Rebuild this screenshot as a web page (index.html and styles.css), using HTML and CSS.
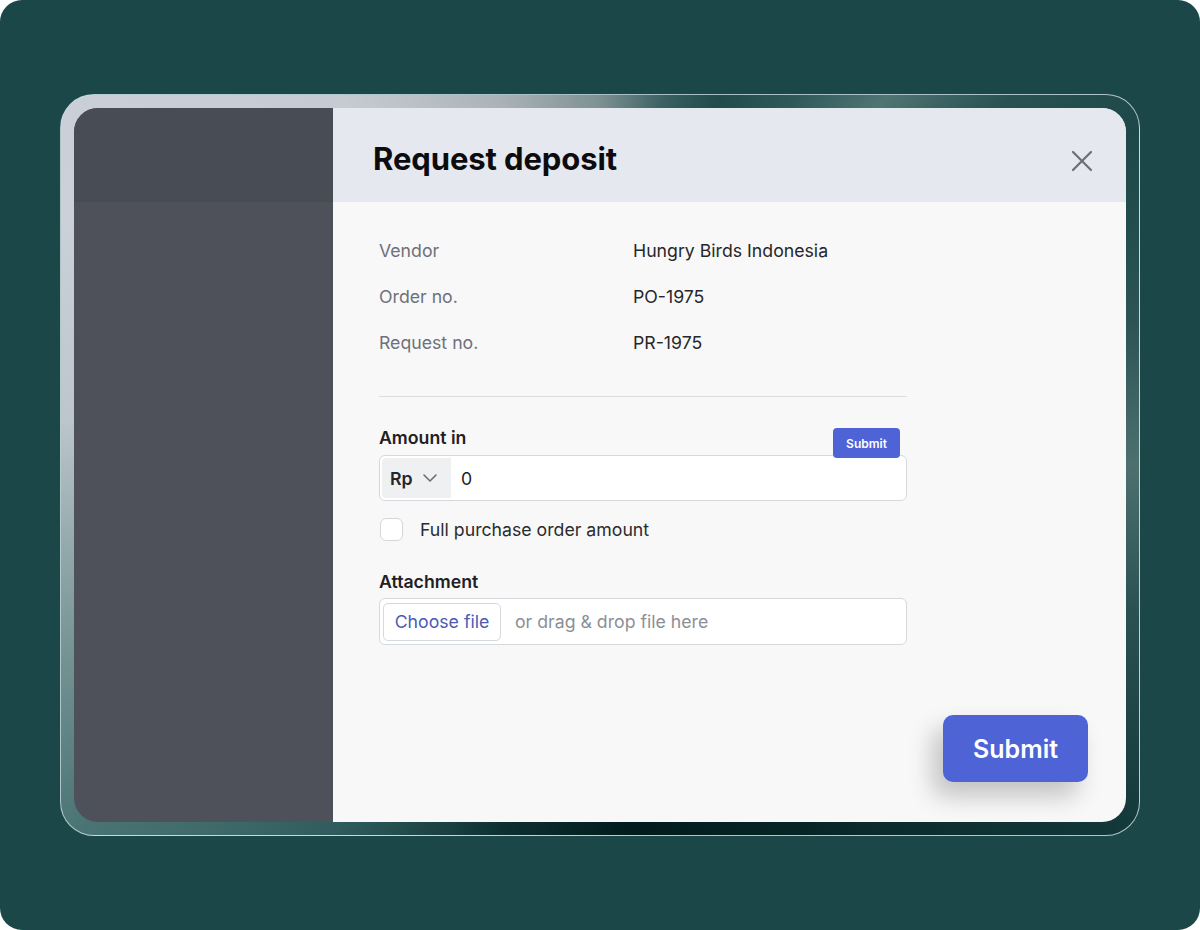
FILE: index.html
```html
<!DOCTYPE html>
<html lang="en">
<head>
<meta charset="utf-8">
<title>Request deposit</title>
<link rel="stylesheet" href="styles.css">
</head>
<body>
<div class="screen">
  <div class="bezel">
    <div class="window">
      <aside class="sidebar">
        <div class="sidebar-top"></div>
      </aside>
      <section class="dialog">
        <header class="dialog-header">
          <h1 class="title">Request deposit</h1>
          <button class="close" aria-label="Close">
            <svg width="22" height="22" viewBox="0 0 22 22"><path d="M2 2 L20 20 M20 2 L2 20" stroke="#6b6e75" stroke-width="2.2" stroke-linecap="round" fill="none"/></svg>
          </button>
        </header>
        <div class="dialog-body">
          <dl class="details">
            <div class="row"><dt>Vendor</dt><dd>Hungry Birds Indonesia</dd></div>
            <div class="row"><dt>Order no.</dt><dd>PO-1975</dd></div>
            <div class="row"><dt>Request no.</dt><dd>PR-1975</dd></div>
          </dl>
          <hr class="divider">
          <div class="field amount-field">
            <label class="field-label">Amount in</label>
            <div class="input amount-input">
              <div class="currency">
                <span>Rp</span>
                <svg width="16" height="10" viewBox="0 0 16 10"><path d="M2 2 L8 8 L14 2" stroke="#6b6e75" stroke-width="1.6" fill="none" stroke-linecap="round" stroke-linejoin="round"/></svg>
              </div>
              <span class="amount-value">0</span>
            </div>
            <button class="mini-submit">Submit</button>
          </div>
          <label class="check-row">
            <span class="checkbox"></span>
            <span>Full purchase order amount</span>
          </label>
          <div class="field attach-field">
            <label class="field-label">Attachment</label>
            <div class="input file-input">
              <button class="choose">Choose file</button>
              <span class="drop-hint">or drag &amp; drop file here</span>
            </div>
          </div>
          <div class="footer">
            <button class="submit">Submit</button>
          </div>
        </div>
      </section>
    </div>
  </div>
</div>
</body>
</html>
```
FILE: styles.css
```css
* { box-sizing: border-box; }
html, body { margin: 0; padding: 0; background: #ffffff; }
body { font-family: Inter, "Noto Sans", "Liberation Sans", sans-serif; }

.screen {
  width: 1200px;
  height: 930px;
  background: #1c4749;
  border-radius: 22px;
  padding: 94px 60px;
}

.bezel {
  height: 742px;
  border-radius: 34px;
  padding: 13px;
  border: 1.5px solid rgba(200, 220, 224, 0.85);
  background: conic-gradient(from 0deg at 50% 50%,
    #7d9194 0deg,
    #3a6061 10deg,
    #214a4b 18deg,
    #2f5859 28deg,
    #4f7573 38deg,
    #2a5253 48deg,
    #1d4748 58deg,
    #2c5455 75deg,
    #4d706f 90deg,
    #2b5253 105deg,
    #133839 125deg,
    #072526 150deg,
    #021b1c 175deg,
    #0d2f30 195deg,
    #2e5a5b 215deg,
    #4a7474 235deg,
    #8aa2a5 258deg,
    #bcc6cc 275deg,
    #cbd0d9 295deg,
    #c6cad3 325deg,
    #aab1b8 345deg,
    #7d9194 360deg);
}

.window {
  display: flex;
  height: 100%;
  border-radius: 24px;
  overflow: hidden;
}

.sidebar {
  width: 259px;
  background: #4e5159;
  flex-shrink: 0;
}
.sidebar-top { height: 94px; background: #484c54; }

.dialog {
  flex: 1;
  display: flex;
  flex-direction: column;
  background: #f8f8f8;
}

.dialog-header {
  height: 94px;
  background: #e5e8ef;
  display: flex;
  align-items: center;
  justify-content: space-between;
  padding: 0 33px 0 40px;
}
.title {
  margin: 0;
  font-size: 31px;
  font-weight: 700;
  color: #0c0c0e;
  letter-spacing: -0.1px;
  padding-top: 7px;
}
.close {
  border: 0;
  background: none;
  padding: 0;
  width: 22px;
  height: 22px;
  display: flex;
  margin-top: 11px;
}

.dialog-body {
  flex: 1;
  display: flex;
  flex-direction: column;
  padding: 25px 0 0 46px;
}
.details { margin: 0; width: 528px; }
.row { display: flex; height: 46px; align-items: center; font-size: 17.7px; }
.row dt { width: 254px; color: #6e7178; }
.row dd { margin: 0; color: #26272b; }

.divider {
  width: 528px;
  margin: 31px 0 0 0;
  border: 0;
  border-top: 1px solid #d8dbe0;
}

.field { width: 528px; position: relative; }
.amount-field { margin-top: 30px; }
.field-label {
  display: block;
  font-size: 17.7px;
  font-weight: 600;
  color: #1f2024;
  line-height: 22px;
}
.input {
  margin-top: 6px;
  height: 46px;
  background: #ffffff;
  border: 1px solid #d5d9de;
  border-radius: 6px;
  display: flex;
  align-items: center;
  font-size: 17.7px;
}
.amount-input { padding: 2px; }
.currency {
  height: 100%;
  width: 69px;
  background: #eef0f2;
  border-radius: 4px 0 0 4px;
  display: flex;
  align-items: center;
  gap: 9px;
  padding-left: 8px;
  font-weight: 600;
  color: #24252a;
}
.amount-value { margin-left: 10px; color: #202124; }

.mini-submit {
  position: absolute;
  top: 1px;
  right: 7px;
  width: 67px;
  height: 30px;
  border: 0;
  border-radius: 4px;
  background: #4e63d6;
  color: #ffffff;
  font-family: inherit;
  font-size: 12px;
  font-weight: 600;
}

.check-row {
  margin-top: 17px;
  display: flex;
  align-items: center;
  gap: 17px;
  font-size: 17.7px;
  color: #2a2b2f;
  height: 23px;
}
.checkbox {
  width: 23px;
  height: 23px;
  border: 1.5px solid #d3d6db;
  border-radius: 6px;
  background: #ffffff;
  margin-left: 1px;
}

.attach-field { margin-top: 30px; }
.file-input { margin-top: 5px; height: 47px; padding: 0 3px; gap: 14px; }
.choose {
  height: 38px;
  width: 118px;
  border: 1px solid #d5d9de;
  border-radius: 5px;
  background: #ffffff;
  color: #4b5bb3;
  font-family: inherit;
  font-size: 17.7px;
  padding: 0;
}
.drop-hint { color: #8c8f96; }

.footer {
  margin-top: auto;
  display: flex;
  justify-content: flex-end;
  padding: 0 38px 40px 0;
}
.submit {
  width: 145px;
  height: 67px;
  border: 0;
  border-radius: 10px;
  background: #4e63d6;
  color: #ffffff;
  font-family: inherit;
  font-size: 25px;
  font-weight: 600;
  box-shadow: -10px 14px 24px rgba(0, 0, 0, 0.22);
}
```
